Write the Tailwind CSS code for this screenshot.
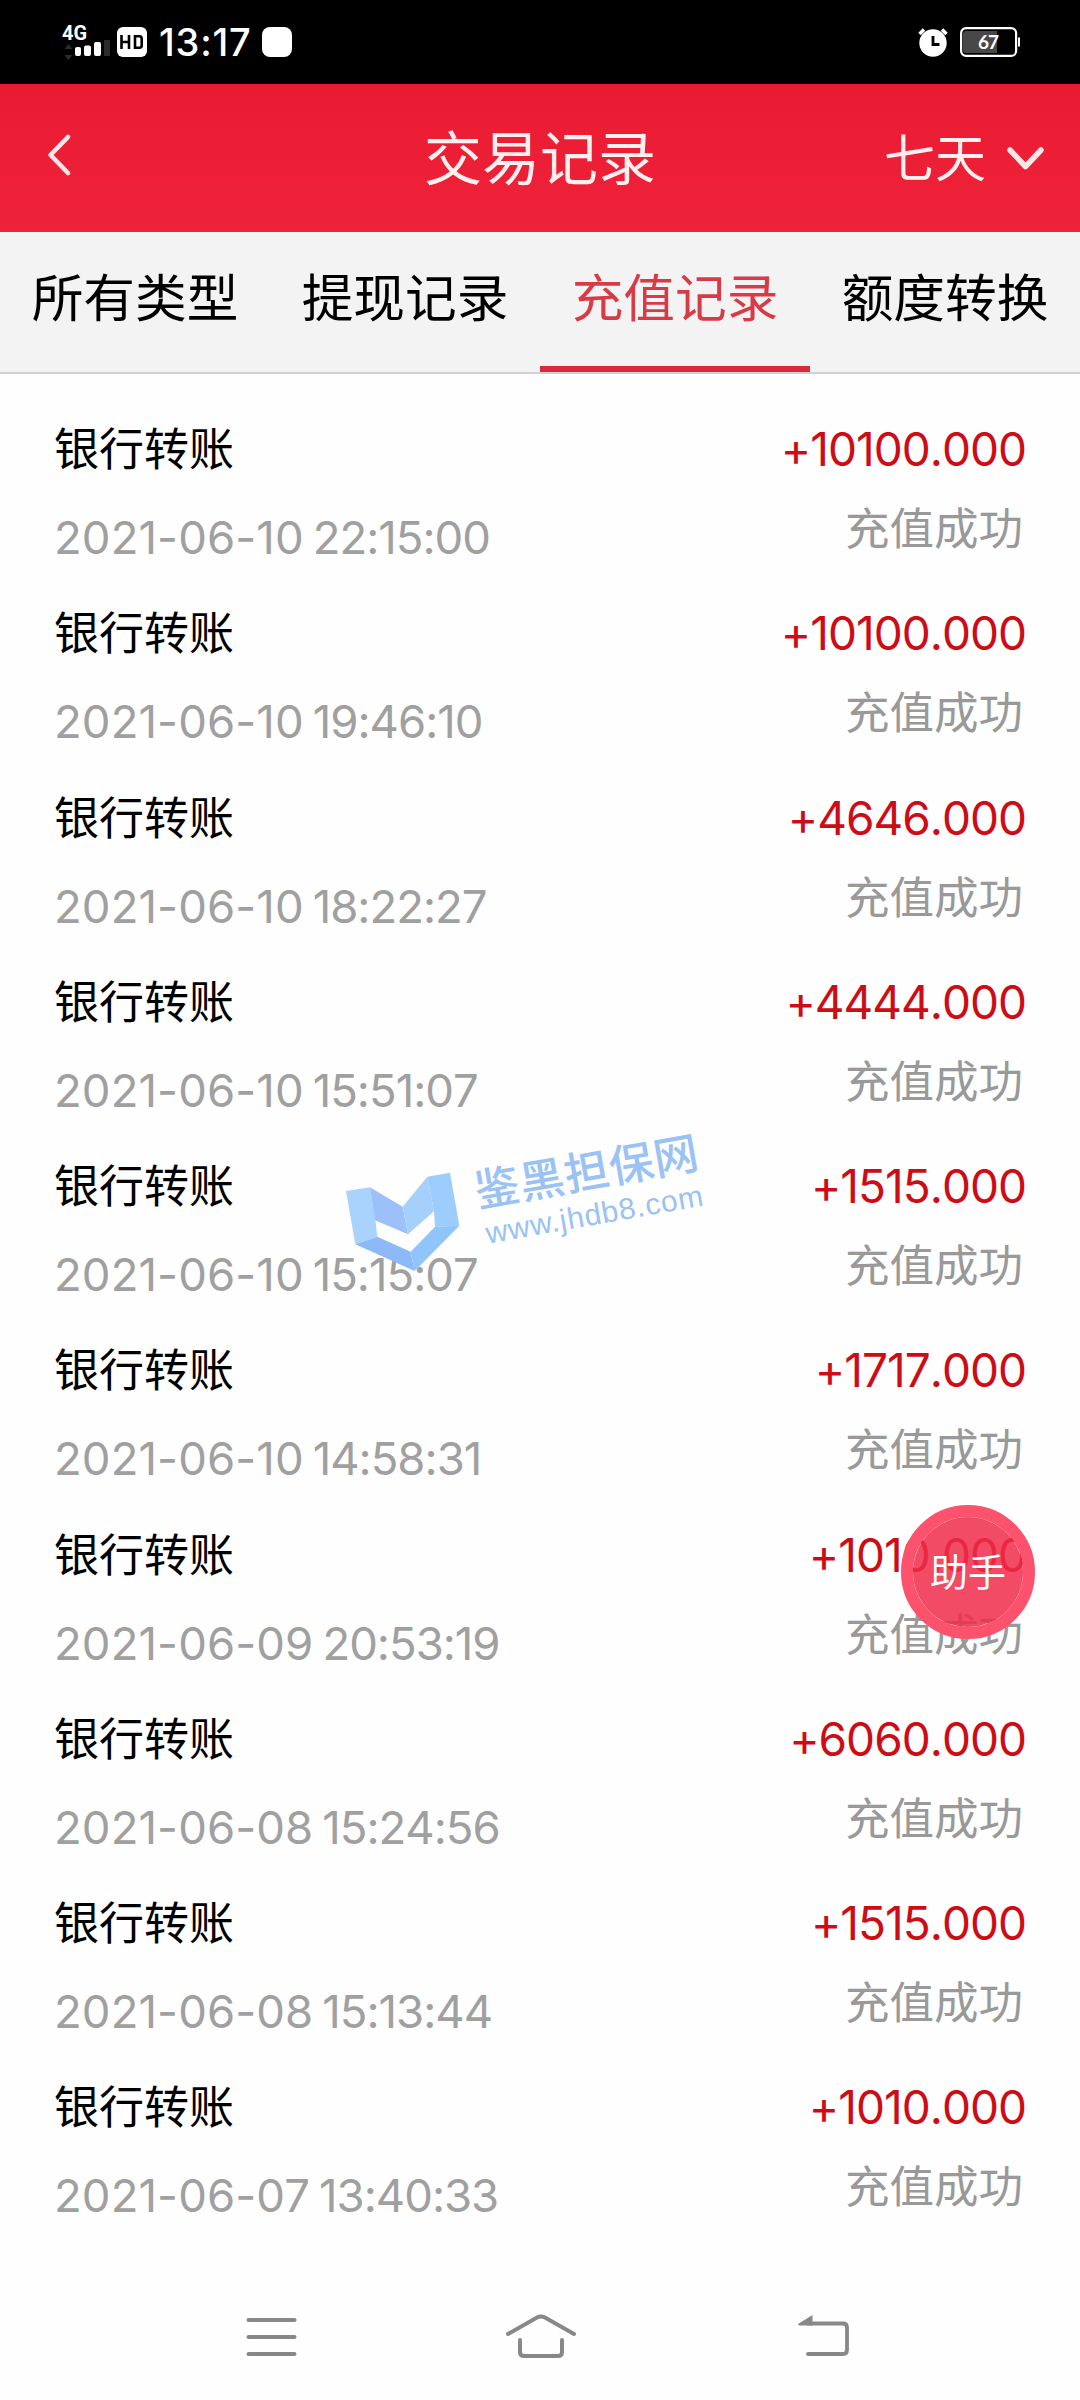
<!DOCTYPE html>
<html lang="zh-CN">
<head>
<meta charset="utf-8">
<title>交易记录</title>
<script src="https://cdn.jsdelivr.net/npm/@tailwindcss/browser@4"></script>
</head>
<body class="bg-white">
<div class="relative flex h-[2400px] w-[1080px] flex-col overflow-hidden bg-[#fefefe] font-['Inter','Noto_Sans_CJK_SC',sans-serif] text-black">

  <!-- Status bar -->
  <div class="flex h-[84px] shrink-0 items-center justify-between bg-black pr-[60px] pl-[62px] text-white">
    <div class="flex items-center">
      <svg class="h-9 w-[49px] overflow-visible" viewBox="0 0 49 36" fill="#fff">
        <text x="0" y="16" font-family="Roboto" font-weight="700" font-size="21" textLength="25" lengthAdjust="spacingAndGlyphs">4G</text>
        <path d="M6.500 20l4 5h-8zM6.500 36l4-5h-8z" fill="#2b2b2b"/>
        <rect x="13" y="23" width="6" height="9" rx="2"/>
        <rect x="22" y="21.500" width="7" height="10.500" rx="2"/>
        <rect x="32" y="18" width="7" height="14" rx="2"/>
        <rect x="42" y="16" width="6" height="16" fill="#2b2b2b"/>
      </svg>
      <svg class="ml-1.5 h-[30px] w-[30px]" viewBox="0 0 30 30">
        <rect width="30" height="30" rx="6" fill="#fff"/>
        <path d="M4.500 8v14M12 8v14M4.500 15h7.500M18 9.300h4.500q2.200 0 2.200 2.500v6.400q0 2.500-2.200 2.500H18z" fill="none" stroke="#000" stroke-width="2.600"/>
      </svg>
      <span class="ml-3 w-[91px] text-[38px] leading-none font-medium tracking-[0.8px] whitespace-nowrap">13:17</span>
      <span class="ml-3 h-[30px] w-[30px] rounded-[8px] bg-white"></span>
    </div>
    <div class="flex items-center gap-3">
      <svg class="h-[30px] w-[30px]" viewBox="0 0 30 30">
        <circle cx="15" cy="16" r="13.700" fill="#fff"/>
        <path d="M1.500 7L6 2.500M28.500 7L24 2.500" stroke="#fff" stroke-width="3.500"/>
        <path d="M15 9v8.500h6.500" fill="none" stroke="#000" stroke-width="2.800"/>
      </svg>
      <svg class="h-[30px] w-[60px]" viewBox="0 0 60 30">
        <rect x="1.100" y="1.100" width="55" height="27.800" rx="5" fill="none" stroke="#fff" stroke-width="2.200"/>
        <path d="M6 4h31v22H6q-3 0-3-3V7q0-3 3-3z" fill="#484848"/>
        <rect x="58" y="10.500" width="2" height="9" fill="#fff"/>
        <text x="18" y="22" font-family="Lato" font-weight="700" font-size="19" fill="#fff" textLength="21">67</text>
      </svg>
    </div>
  </div>

  <!-- Title bar -->
  <header class="grid h-[148px] shrink-0 grid-cols-3 items-center bg-linear-to-b from-[#e91b33] to-[#ee2239] text-[#fff0ee]">
    <svg class="-mt-1.5 ml-[46px] h-11 w-7" viewBox="0 0 28 44" fill="none" stroke="#ffe6e6" stroke-width="4.600" stroke-linecap="round" stroke-linejoin="round"><path d="M22 4L4.500 22L22 40"/></svg>
    <h1 class="pt-0.5 text-center text-[58px] leading-none whitespace-nowrap">交易记录</h1>
    <div class="flex items-center justify-end pr-[34px]">
      <span class="text-[51px] leading-none">七天</span>
      <svg class="ml-[18px] h-7 w-[42px]" viewBox="0 0 42 28" fill="none" stroke="#ffe6e6" stroke-width="5.500" stroke-linecap="round" stroke-linejoin="round"><path d="M6 6L21.500 22.500L37 6"/></svg>
    </div>
  </header>

  <!-- Tabs -->
  <nav class="grid h-[142px] shrink-0 grid-cols-4 border-b-2 border-[#d0d2d2] bg-[#f3f3f3] text-center text-[51.700px] leading-[133px] whitespace-nowrap">
    <span>所有类型</span>
    <span>提现记录</span>
    <span class="border-b-[6px] border-[#d62a3d] text-[#d93a47]">充值记录</span>
    <span>额度转换</span>
  </nav>

  <!-- Records -->
  <main id="records" class="flex grow flex-col px-[54px] pt-[45px]"></main>

  <!-- System navigation -->
  <footer class="flex h-[126px] shrink-0 items-center pl-[245px]">
    <svg class="h-12 w-[52px]" viewBox="0 0 52 48" stroke="#888" stroke-width="4" stroke-linecap="round"><path d="M3.500 7h46M3.500 24h46M3.500 41h46"/></svg>
    <svg class="ml-[207px] h-12 w-[74px]" viewBox="0 0 74 48" fill="none" stroke="#888" stroke-width="4" stroke-linecap="round"><path d="M4 21L33 4.500q4-2 8 0L70 21M16 27v12q0 4 4 4h34q4 0 4-4V27"/></svg>
    <svg class="ml-[220px] h-12 w-[53px]" viewBox="0 0 53 48" fill="none" stroke="#888" stroke-width="3.800" stroke-linecap="round"><path d="M10 10.500h35q4 0 4 4V37q0 4-4 4H10"/><path d="M0 11L14.500 2v10.500H1.500Q0 12 0 11z" fill="#888" stroke="none"/></svg>
  </footer>

  <!-- Watermark -->
  <svg class="pointer-events-none absolute top-[1110px] left-[320px] h-[190px] w-[420px]" viewBox="0 0 1260 570">
    <path d="M78 243L150 232L166 331L172 380L106 403z" fill="#a9d3fd"/>
    <path d="M150 232L248 290L264 373L165 331z" fill="#9bc0fa"/>
    <path d="M248 290L322 200L342 304L264 373z" fill="#a6d0fc"/>
    <path d="M322 200L390 188L418 347L345 350L342 304z" fill="#9ccdfd"/>
    <path d="M106 403L172 380L272 425L284 483z" fill="#8eb9f8"/>
    <path d="M272 425L345 350L418 347L284 483z" fill="#90c5fc"/>
    <g fill="#9ac2f2">
      <text transform="translate(474 292) rotate(-10)" font-family="'Noto Sans CJK SC'" font-weight="500" font-size="134" textLength="678">鉴黑担保网</text>
      <text transform="translate(503 401) rotate(-10)" font-family="'Liberation Sans'" font-size="90" textLength="660">www.jhdb8.com</text>
    </g>
  </svg>

  <!-- Assistant button -->
  <button class="absolute top-[1505px] left-[901px] h-[134px] w-[134px] rounded-full border-[12px] border-[#fd526d] bg-[#f02b4a]/85 bg-clip-padding text-[38px] leading-none whitespace-nowrap text-white">助手</button>
</div>

<script>
  const records = [
    ['2021-06-10', '22:15:00', '+10100.000'],
    ['2021-06-10', '19:46:10', '+10100.000'],
    ['2021-06-10', '18:22:27', '+4646.000'],
    ['2021-06-10', '15:51:07', '+4444.000'],
    ['2021-06-10', '15:15:07', '+1515.000'],
    ['2021-06-10', '14:58:31', '+1717.000'],
    ['2021-06-09', '20:53:19', '+1010.000'],
    ['2021-06-08', '15:24:56', '+6060.000'],
    ['2021-06-08', '15:13:44', '+1515.000'],
    ['2021-06-07', '13:40:33', '+1010.000'],
  ];
  document.getElementById('records').innerHTML = records.map(([date, time, amount]) => `
    <section class="flex h-[184.250px] shrink-0 justify-between whitespace-nowrap leading-[60px]">
      <div class="flex flex-col gap-7">
        <span class="pt-px text-[45px]">银行转账</span>
        <span class="flex gap-[9px] text-[45.500px] text-[#a0a0a0]"><span class="tracking-[0.1px]">${date}</span><span class="tracking-[-1px] [font-kerning:none]">${time}</span></span>
      </div>
      <div class="flex flex-col items-end gap-[18px]">
        <span class="text-[46px] tracking-[-1px] text-[#ce0c16] [font-kerning:none]">${amount}</span>
        <span class="pt-0.5 pr-[3px] text-[44.500px] text-[#999]">充值成功</span>
      </div>
    </section>`).join('');
</script>
</body>
</html>
